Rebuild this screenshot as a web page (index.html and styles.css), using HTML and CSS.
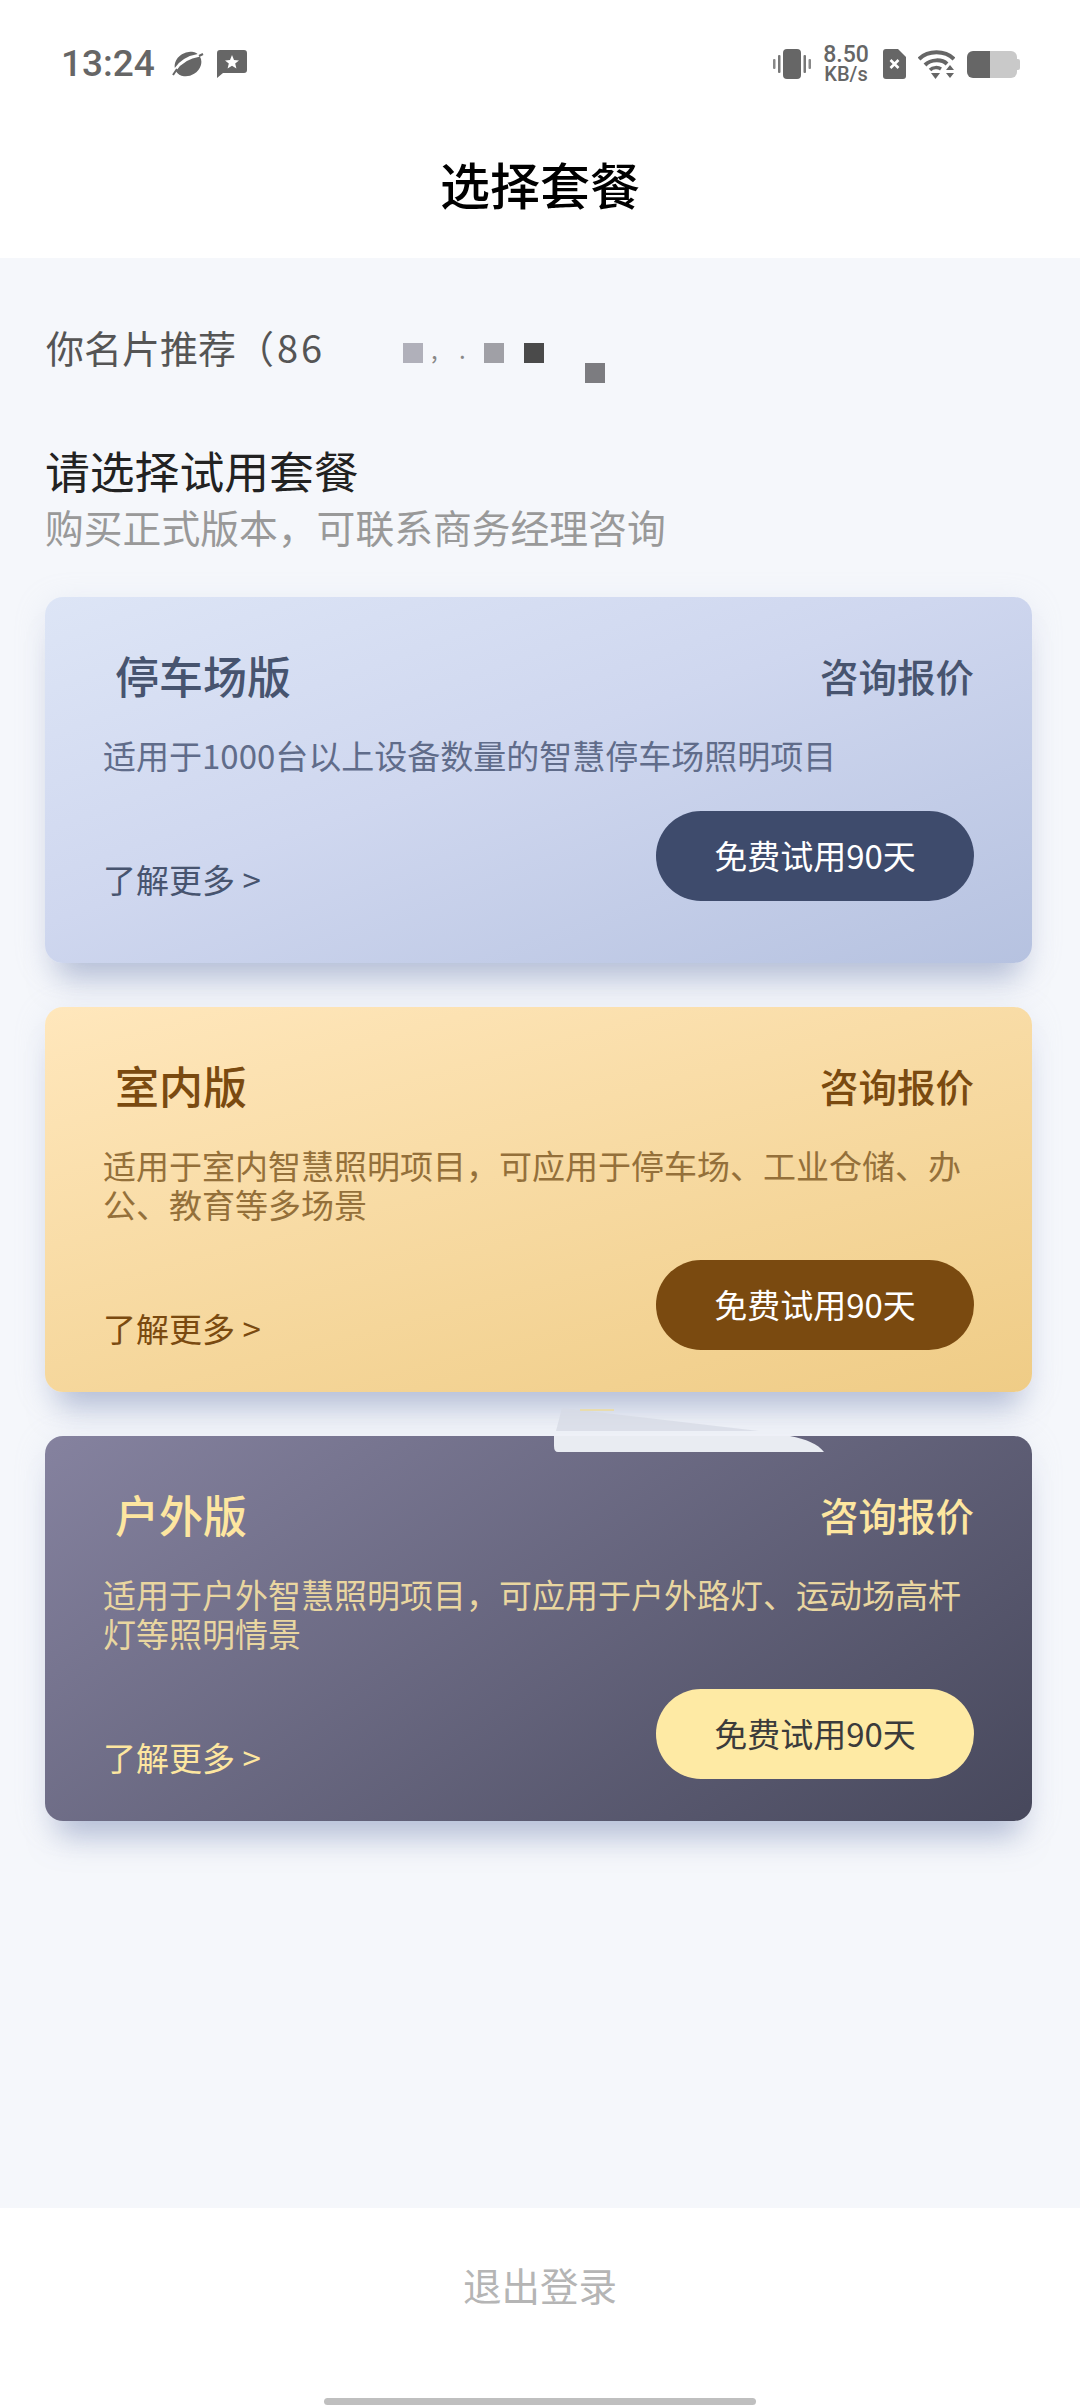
FILE: index.html
```html
<!DOCTYPE html>
<html lang="zh-CN">
<head>
    <meta charset="UTF-8">
    <meta name="viewport" content="width=device-width, initial-scale=1.0">
    <title>选择套餐</title>
    <link rel="stylesheet" href="styles.css">
</head>
<body>
    <div class="page">
        <header class="header">
            <div class="status">
                <div class="status-left">
                    <span class="time">13:24</span>
                    <svg class="icon-orb" viewBox="0 0 32 30">
                        <ellipse cx="16" cy="15" rx="14" ry="11.500" fill="#666" transform="rotate(-32 16 15)"/>
                        <path d="M3 21 C8 13 16 8 28 6" stroke="#fff" stroke-width="3" fill="none"/>
                        <path d="M1 26 L5 20 M27 7 L31 5" stroke="#666" stroke-width="2" fill="none"/>
                    </svg>
                    <svg class="icon-msg" viewBox="0 0 30 28">
                        <path d="M3 0 H27 a3 3 0 0 1 3 3 V20 a3 3 0 0 1 -3 3 H6 L0 28 V3 a3 3 0 0 1 3 -3 Z" fill="#666"/>
                        <path d="M15 5 L17 10 L22 10.4 L18.2 13.6 L19.4 18.5 L15 15.8 L10.6 18.5 L11.8 13.6 L8 10.4 L13 10 Z" fill="#fff"/>
                    </svg>
                </div>
                <div class="status-right">
                    <svg class="icon-vibrate" viewBox="0 0 38 30">
                        <rect x="10" y="0" width="18" height="30" rx="4" fill="#666"/>
                        <rect x="5" y="6" width="2.500" height="18" rx="1" fill="#777"/>
                        <rect x="0" y="10" width="2.500" height="10" rx="1" fill="#888"/>
                        <rect x="30.500" y="6" width="2.500" height="18" rx="1" fill="#777"/>
                        <rect x="35.500" y="10" width="2.500" height="10" rx="1" fill="#888"/>
                    </svg>
                    <div class="speed">
                        <span class="speed-num">8.50</span>
                        <span class="speed-unit">KB/s</span>
                    </div>
                    <svg class="icon-sim" viewBox="0 0 23 30">
                        <path d="M3 0 H15 L23 8 V27 a3 3 0 0 1 -3 3 H3 a3 3 0 0 1 -3 -3 V3 a3 3 0 0 1 3 -3 Z" fill="#666"/>
                        <path d="M7.500 11 L15.500 19 M15.500 11 L7.500 19" stroke="#fff" stroke-width="2.600"/>
                    </svg>
                    <svg class="icon-wifi" viewBox="0 0 37 29">
                        <path d="M1 9 C10 0 27 0 36 9" stroke="#666" stroke-width="4" fill="none"/>
                        <path d="M7 15 C13 9 24 9 29 14" stroke="#666" stroke-width="4" fill="none"/>
                        <path d="M12 20 C15 17 20 17 23 19" stroke="#666" stroke-width="3.500" fill="none"/>
                        <path d="M13 23 H22 L17.500 29 Z" fill="#666"/>
                        <path d="M32 15 L36 20 H28 Z M28 23 H36 L32 28 Z" fill="#666"/>
                    </svg>
                    <div class="battery">
                        <div class="battery-fill"></div>
                        <div class="battery-tip"></div>
                    </div>
                </div>
            </div>
            <h1 class="title">选择套餐</h1>
        </header>

        <main class="main">
            <div class="referrer">
                <span>你名片推荐<span class="referrer-num">（86</span></span>
                <span class="marks">, .</span>
                <i class="blur blur-1"></i>
                <i class="blur blur-2"></i>
                <i class="blur blur-3"></i>
                <i class="blur blur-4"></i>
            </div>
            <h2 class="choose">请选择试用套餐</h2>
            <p class="hint">购买正式版本，可联系商务经理咨询</p>

            <section class="card card-blue">
                <div class="card-head">
                    <h3>停车场版</h3>
                    <span class="quote">咨询报价</span>
                </div>
                <p class="desc">适用于1000台以上设备数量的智慧停车场照明项目</p>
                <div class="card-foot">
                    <a class="more">了解更多 &gt;</a>
                    <button class="try">免费试用90天</button>
                </div>
            </section>

            <section class="card card-gold">
                <div class="card-head">
                    <h3>室内版</h3>
                    <span class="quote">咨询报价</span>
                </div>
                <p class="desc">适用于室内智慧照明项目，可应用于停车场、工业仓储、办公、教育等多场景</p>
                <div class="card-foot">
                    <a class="more">了解更多 &gt;</a>
                    <button class="try">免费试用90天</button>
                </div>
            </section>

            <section class="card card-dark">
                <div class="card-head">
                    <h3>户外版</h3>
                    <span class="quote">咨询报价</span>
                </div>
                <p class="desc">适用于户外智慧照明项目，可应用于户外路灯、运动场高杆灯等照明情景</p>
                <div class="card-foot">
                    <a class="more">了解更多 &gt;</a>
                    <button class="try">免费试用90天</button>
                </div>
            </section>

            <svg class="smear" viewBox="0 0 280 48">
                <path d="M8 0 L205 23 H2 Z" fill="#d5d9e4" opacity="0.75"/>
                <rect x="26" y="1" width="34" height="2" fill="#e8dcae"/>
                <path d="M0 28 H236 C252 31 264 36 270 44 H4 Q0 44 0 38 Z" fill="#e9ecf2"/>
            </svg>
        </main>

        <footer class="footer">
            <a class="logout">退出登录</a>
            <div class="home-bar"></div>
        </footer>
    </div>
</body>
</html>
```

FILE: styles.css
```css
* {
    margin: 0;
    padding: 0;
    box-sizing: border-box;
}

body {
    font-family: "Noto Sans CJK SC", "Noto Sans", sans-serif;
    background-color: #f5f7fb;
}

.page {
    width: 1080px;
    height: 2408px;
    display: flex;
    flex-direction: column;
    overflow: hidden;
}

.header {
    height: 258px;
    background-color: #fff;
    padding-top: 45px;
}

.status {
    height: 38px;
    padding: 0 60px 0 61px;
    display: flex;
    justify-content: space-between;
    align-items: center;
}

.status-left,
.status-right {
    display: flex;
    align-items: center;
}

.time {
    font-family: Roboto, sans-serif;
    font-size: 37px;
    font-weight: 500;
    color: #666;
    line-height: 38px;
}

.icon-orb {
    width: 32px;
    height: 30px;
    margin-left: 17px;
}

.icon-msg {
    width: 30px;
    height: 28px;
    margin-left: 13px;
}

.icon-vibrate {
    width: 38px;
    height: 30px;
}

.speed {
    width: 48px;
    margin-left: 11px;
    display: flex;
    flex-direction: column;
    align-items: center;
    color: #666;
    font-family: Roboto, sans-serif;
    font-weight: 500;
}

.speed-num {
    font-size: 23px;
    line-height: 20px;
}

.speed-unit {
    font-size: 20px;
    line-height: 18px;
}

.icon-sim {
    width: 23px;
    height: 30px;
    margin-left: 13px;
}

.icon-wifi {
    width: 37px;
    height: 29px;
    margin-left: 12px;
}

.battery {
    width: 53px;
    height: 27px;
    margin-left: 12px;
    display: flex;
    align-items: center;
}

.battery-fill {
    width: 50px;
    height: 27px;
    border-radius: 6px;
    background: linear-gradient(to right, #666 46%, #c9c9c9 46%);
}

.battery-tip {
    width: 3px;
    height: 11px;
    border-radius: 0 2px 2px 0;
    background-color: #c9c9c9;
}

.title {
    margin-top: 72px;
    font-size: 50px;
    font-weight: 500;
    line-height: 56px;
    color: #000;
    text-align: center;
}

.main {
    flex: 1;
    position: relative;
    padding: 0 48px 0 45px;
}

.referrer {
    height: 60px;
    margin-top: 59px;
    padding-left: 1px;
    font-size: 38px;
    line-height: 60px;
    color: #555;
    position: relative;
}

.referrer-num {
    letter-spacing: 3px;
}

.marks {
    position: absolute;
    left: 386px;
    top: 2px;
    font-size: 24px;
    letter-spacing: 8px;
    color: #888;
}

.blur {
    position: absolute;
    width: 20px;
    height: 20px;
}

.blur-1 {
    left: 358px;
    top: 26px;
    background-color: #b0b0ba;
}

.blur-2 {
    left: 439px;
    top: 26px;
    background-color: #a0a0a6;
}

.blur-3 {
    left: 479px;
    top: 26px;
    background-color: #4a4a4a;
}

.blur-4 {
    left: 540px;
    top: 46px;
    background-color: #7c7c80;
}

.choose {
    margin-top: 63px;
    font-size: 44.800px;
    font-weight: 400;
    line-height: 60px;
    color: #222;
}

.hint {
    font-size: 38.800px;
    line-height: 52px;
    color: #999;
}

.card {
    width: 987px;
    margin-top: 45px;
    padding: 48px 58px 0;
    border-radius: 18px;
    box-shadow: 0 30px 30px -14px rgba(130, 145, 185, 0.5), 0 6px 30px rgba(190, 200, 225, 0.25);
}

.card + .card {
    margin-top: 44px;
}

.card-head {
    display: flex;
    justify-content: space-between;
    align-items: center;
    height: 60px;
}

.card-head h3 {
    margin-left: 12px;
    font-size: 44px;
    font-weight: 500;
}

.quote {
    font-size: 38.500px;
    font-weight: 500;
}

.desc {
    margin-top: 31px;
    font-size: 33px;
    line-height: 39px;
}

.card-foot {
    margin-top: 36px;
    display: flex;
    justify-content: space-between;
    align-items: flex-end;
}

.more {
    font-size: 33px;
    line-height: 40px;
    padding-bottom: 2px;
}

.try {
    width: 318px;
    height: 90px;
    border: none;
    border-radius: 45px;
    padding-bottom: 3px;
    font-family: inherit;
    font-size: 33px;
}

.card-blue {
    height: 366px;
    background: linear-gradient(160deg, #dde5f6, #cfd7ef 45%, #b6c2e0);
}

.card-blue h3,
.card-blue .quote,
.card-blue .more {
    color: #47546f;
}

.card-blue .desc {
    color: #606c8a;
}

.card-blue .try {
    background-color: #3e4b6c;
    color: #fff;
}

.card-gold {
    height: 385px;
    background: linear-gradient(165deg, #ffe7bc, #efcc86);
}

.card-gold h3,
.card-gold .quote,
.card-gold .more {
    color: #7a4a10;
}

.card-gold .desc {
    color: #94703a;
}

.card-gold .try {
    background-color: #7a4a10;
    color: #fff;
}

.card-dark {
    height: 385px;
    background: linear-gradient(145deg, #85829f, #47485c);
}

.card-dark h3,
.card-dark .quote,
.card-dark .more {
    color: #fde6a0;
}

.card-dark .desc {
    color: #e9d6a0;
}

.card-dark .try {
    background-color: #feeaa4;
    color: #3b3b3b;
}

/* smeared patch on top of the third card */
.smear {
    position: absolute;
    left: 554px;
    top: 1150px;
    width: 280px;
    height: 48px;
}

.footer {
    height: 200px;
    background-color: #fff;
    position: relative;
    padding-top: 48px;
    text-align: center;
}

.logout {
    font-size: 38.500px;
    line-height: 56px;
    color: #b5b5b5;
}

.home-bar {
    position: absolute;
    left: 324px;
    bottom: 3px;
    width: 432px;
    height: 7px;
    border-radius: 4px;
    background-color: #bfbfbf;
}
```
